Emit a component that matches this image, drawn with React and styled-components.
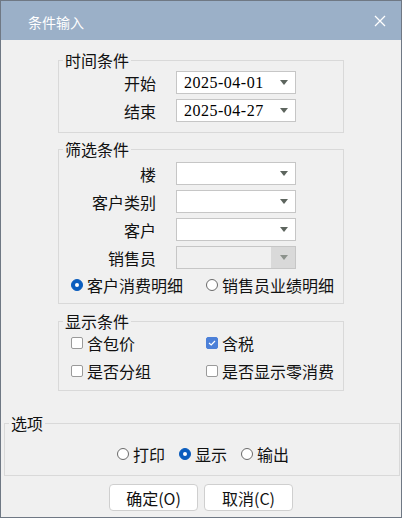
import React from "react";
import styled, { createGlobalStyle } from "styled-components";

const GlobalStyle = createGlobalStyle`
  body {
    margin: 0;
    background: #f0f0f0;
    font-family: "Noto Sans CJK SC", "Noto Sans", sans-serif;
    color: #111;
  }
  * { box-sizing: border-box; }
`;

const filterFields = [
  { label: "楼" },
  { label: "客户类别" },
  { label: "客户" },
  { label: "销售员", disabled: true },
];

export default function App() {
  return (
    <Window>
      <GlobalStyle />
      <TitleBar>
        <Title>条件输入</Title>
        <CloseIcon width="12" height="12" viewBox="0 0 12 12">
          <path d="M1 1 L11 11 M11 1 L1 11" stroke="#fff" strokeWidth="1.3" fill="none" />
        </CloseIcon>
      </TitleBar>

      <Group $mt={11} $pt={2} $pb={10}>
        <Legend>时间条件</Legend>
        <Rows>
          <FieldRow>
            <Label>开始</Label>
            <Combo value="2025-04-01" />
          </FieldRow>
          <FieldRow>
            <Label>结束</Label>
            <Combo value="2025-04-27" />
          </FieldRow>
        </Rows>
      </Group>

      <Group $mt={7} $pt={4} $pb={8}>
        <Legend>筛选条件</Legend>
        <Rows>
          {filterFields.map((f) => (
            <FieldRow key={f.label}>
              <Label>{f.label}</Label>
              <Combo disabled={f.disabled} />
            </FieldRow>
          ))}
        </Rows>
        <ChoiceGrid $mt={6}>
          <Choice>
            <Radio $checked />
            客户消费明细
          </Choice>
          <Choice>
            <Radio />
            销售员业绩明细
          </Choice>
        </ChoiceGrid>
      </Group>

      <Group $mt={8} $pt={2} $pb={8}>
        <Legend>显示条件</Legend>
        <ChoiceGrid>
          <Choice $h={22}>
            <Check />
            含包价
          </Choice>
          <Choice $h={22}>
            <Check $checked>
              <svg width="8" height="6" viewBox="0 0 8 6">
                <path d="M1 3 L3.2 5 L7 1" stroke="#fff" strokeWidth="1.2" fill="none" />
              </svg>
            </Check>
            含税
          </Choice>
          <Choice $h={22}>
            <Check />
            是否分组
          </Choice>
          <Choice $h={22}>
            <Check />
            是否显示零消费
          </Choice>
        </ChoiceGrid>
      </Group>

      <Group $wide $mt={23} $pt={12} $pb={11}>
        <Legend>选项</Legend>
        <OptionRow>
          <Choice>
            <Radio />
            打印
          </Choice>
          <Choice>
            <Radio $checked />
            显示
          </Choice>
          <Choice>
            <Radio />
            输出
          </Choice>
        </OptionRow>
      </Group>

      <ButtonBar>
        <Button>确定(O)</Button>
        <Button>取消(C)</Button>
      </ButtonBar>
    </Window>
  );
}

function Combo({ value, disabled }) {
  return (
    <ComboBox $disabled={disabled}>
      <ComboText>{value}</ComboText>
      <ComboButton $disabled={disabled}>
        <Arrow $disabled={disabled} />
      </ComboButton>
    </ComboBox>
  );
}

const Window = styled.div`
  width: 402px;
  height: 518px;
  border: 1px solid #6f7884;
  background: #f0f0f0;
  display: flex;
  flex-direction: column;
`;

const TitleBar = styled.div`
  height: 39px;
  background: #9bb0c8;
  display: flex;
  align-items: center;
  justify-content: space-between;
  padding: 0 15px 0 27px;
`;

const Title = styled.span`
  color: #fff;
  font-size: 14px;
  line-height: 18px;
  margin-top: 2px;
`;

const CloseIcon = styled.svg`
  display: block;
`;

const Group = styled.fieldset`
  margin: ${(p) => p.$mt}px 0 0 ${(p) => (p.$wide ? 3 : 57)}px;
  width: ${(p) => (p.$wide ? 396 : 286)}px;
  padding: ${(p) => p.$pt}px 0 ${(p) => p.$pb}px 0;
  border: 1px solid #d9d9d9;
  min-width: 0;
`;

const Legend = styled.legend`
  margin-left: 4px;
  padding: 0 2px;
  font-size: 16px;
  line-height: 18px;
  color: #111;
`;

const Rows = styled.div`
  display: flex;
  flex-direction: column;
  gap: 5px;
`;

const FieldRow = styled.div`
  display: grid;
  grid-template-columns: 97px 120px;
  column-gap: 20px;
  align-items: center;
`;

const Label = styled.span`
  text-align: right;
  font-size: 16px;
  line-height: 20px;
`;

const ComboBox = styled.div`
  height: 23px;
  border: 1px solid #c6c6c6;
  background: ${(p) => (p.$disabled ? "#f0f0f0" : "#fff")};
  display: flex;
  align-items: center;
`;

const ComboText = styled.span`
  flex: 1;
  padding-left: 7px;
  font-family: "Liberation Serif", serif;
  font-size: 16px;
  letter-spacing: 0.5px;
  color: #000;
`;

const ComboButton = styled.span`
  width: 24px;
  align-self: stretch;
  display: flex;
  align-items: center;
  justify-content: center;
  background: ${(p) => (p.$disabled ? "#d9d9d9" : "transparent")};
`;

const Arrow = styled.span`
  width: 0;
  height: 0;
  border-left: 4px solid transparent;
  border-right: 4px solid transparent;
  border-top: 5px solid ${(p) => (p.$disabled ? "#8c928c" : "#5d655e")};
  margin-left: 2px;
`;

const ChoiceGrid = styled.div`
  display: grid;
  grid-template-columns: 135px auto;
  row-gap: 6px;
  padding-left: 12px;
  margin-top: ${(p) => p.$mt || 0}px;
`;

const Choice = styled.label`
  display: inline-flex;
  align-items: center;
  gap: 4px;
  height: ${(p) => p.$h || 20}px;
  font-size: 16px;
  line-height: 20px;
  white-space: nowrap;
`;

const Radio = styled.span`
  width: 12px;
  height: 12px;
  border-radius: 50%;
  flex: none;
  display: flex;
  align-items: center;
  justify-content: center;
  background: ${(p) => (p.$checked ? "#0b5dbe" : "#fff")};
  border: 1px solid ${(p) => (p.$checked ? "#0b5dbe" : "#6a6a6a")};
  &::after {
    content: "";
    display: ${(p) => (p.$checked ? "block" : "none")};
    width: 4px;
    height: 4px;
    border-radius: 50%;
    background: #fff;
  }
`;

const Check = styled.span`
  width: 12px;
  height: 12px;
  flex: none;
  border-radius: 2px;
  display: flex;
  align-items: center;
  justify-content: center;
  background: ${(p) => (p.$checked ? "#4c80d8" : "#fff")};
  border: 1px solid ${(p) => (p.$checked ? "#4c80d8" : "#9a9a9a")};
  svg {
    display: block;
  }
`;

const OptionRow = styled.div`
  display: flex;
  justify-content: center;
  gap: 14px;
  padding-left: 2px;
`;

const ButtonBar = styled.div`
  display: flex;
  justify-content: center;
  gap: 6px;
  margin-top: 8px;
`;

const Button = styled.button`
  width: 89px;
  height: 27px;
  border: 1px solid #cfcfcf;
  border-radius: 4px;
  background: #fff;
  font-family: "Noto Sans CJK SC", "Noto Sans", sans-serif;
  font-size: 16px;
  line-height: 18px;
  color: #111;
  padding: 0;
`;
